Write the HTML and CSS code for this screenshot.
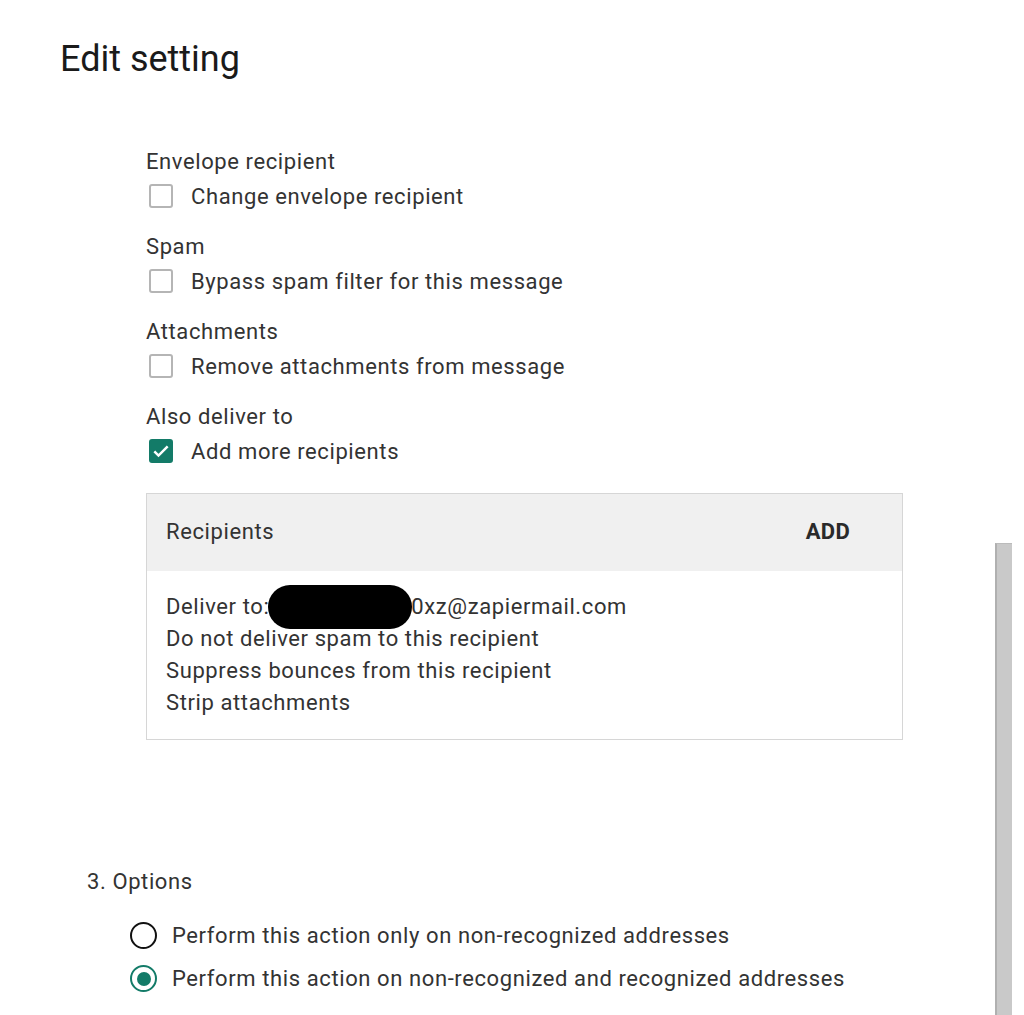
FILE: index.html
```html
<!DOCTYPE html>
<html>
<head>
<meta charset="utf-8">
<link rel="stylesheet" href="styles.css">
</head>
<body>
<div class="page">
  <h1 class="title">Edit setting</h1>
  <div class="settings">
    <div class="group">
      <div class="label">Envelope recipient</div>
      <label class="check"><span class="box"></span><span>Change envelope recipient</span></label>
    </div>
    <div class="group">
      <div class="label">Spam</div>
      <label class="check"><span class="box"></span><span>Bypass spam filter for this message</span></label>
    </div>
    <div class="group">
      <div class="label">Attachments</div>
      <label class="check"><span class="box"></span><span>Remove attachments from message</span></label>
    </div>
    <div class="group">
      <div class="label">Also deliver to</div>
      <label class="check"><span class="box checked"><svg viewBox="0 0 24 24" width="24" height="24"><path d="M4 12.5l5 5 11-11" fill="none" stroke="#fff" stroke-width="3"/></svg></span><span>Add more recipients</span></label>
    </div>
    <div class="recipients">
      <div class="rhead"><span>Recipients</span><span class="add">ADD</span></div>
      <div class="rbody">
        <div class="line">Deliver to:<span class="redact"></span>0xz@zapiermail.com</div>
        <div class="line">Do not deliver spam to this recipient</div>
        <div class="line">Suppress bounces from this recipient</div>
        <div class="line">Strip attachments</div>
      </div>
    </div>
  </div>
  <div class="options">
    <div class="otitle">3. Options</div>
    <label class="radio"><span class="circle"></span><span>Perform this action only on non-recognized addresses</span></label>
    <label class="radio"><span class="circle on"></span><span>Perform this action on non-recognized and recognized addresses</span></label>
  </div>
</div>
<div class="scrollbar"></div>
</body>
</html>
```
FILE: styles.css
```css
html, body {
  margin: 0;
  padding: 0;
  background: #fff;
  overflow: hidden;
}
body {
  font-family: Roboto, "Liberation Sans", sans-serif;
  color: #333;
  width: 1024px;
  height: 1015px;
}
.page {
  padding: 36px 0 0 60px;
}
.title {
  margin: 0;
  font-size: 36px;
  font-weight: 400;
  color: #1a1a1a;
  line-height: 46px;
}
.settings {
  margin-left: 86px;
  margin-top: 63px;
  width: 757px;
}
.group {
  margin-bottom: 17px;
}
.label,
.check,
.line,
.rhead,
.otitle,
.radio {
  font-size: 22px;
  letter-spacing: 0.6px;
}
.label {
  line-height: 34px;
}
.check {
  display: flex;
  align-items: center;
  height: 34px;
}
.box {
  width: 20px;
  height: 20px;
  border: 2px solid #b5b5b5;
  border-radius: 3px;
  margin-left: 3px;
  margin-right: 18px;
  display: flex;
  align-items: center;
  justify-content: center;
  flex: none;
}
.box.checked {
  background: #137b68;
  border-color: #137b68;
}
.box svg {
  width: 20px;
  height: 20px;
}
.recipients {
  margin-top: 25px;
  border: 1px solid #d6d6d6;
}
.rhead {
  background: #f0f0f0;
  height: 77px;
  display: flex;
  align-items: center;
  justify-content: space-between;
  padding: 0 52px 3px 19px;
  box-sizing: border-box;
}
.add {
  font-weight: 700;
  color: #2a2a2a;
  letter-spacing: 0.3px;
}
.rbody {
  padding: 20px 19px 20px;
}
.line {
  line-height: 32px;
  display: flex;
  align-items: center;
  white-space: nowrap;
}
.redact {
  display: inline-block;
  width: 144px;
  height: 44px;
  background: #000;
  border-radius: 22px;
  margin: -6px -1px -6px -1px;
  flex: none;
}
.options {
  margin-top: 125px;
  margin-left: 27px;
}
.otitle {
  line-height: 34px;
  margin-bottom: 15px;
}
.radio {
  display: flex;
  align-items: center;
  height: 43px;
  margin-left: 43px;
}
.circle {
  width: 23px;
  height: 23px;
  border: 2.5px solid #111;
  border-radius: 50%;
  margin-right: 15px;
  box-sizing: content-box;
  position: relative;
  flex: none;
}
.circle.on {
  border-color: #137b68;
}
.circle.on::after {
  content: "";
  position: absolute;
  left: 4.5px;
  top: 4.5px;
  width: 14px;
  height: 14px;
  border-radius: 50%;
  background: #137b68;
}
.scrollbar {
  position: absolute;
  left: 995px;
  top: 543px;
  width: 15px;
  height: 472px;
  background: #c9c9c9;
  border-left: 2px solid #b0b0b0;
  border-top: 1px solid #bbb;
}
```
